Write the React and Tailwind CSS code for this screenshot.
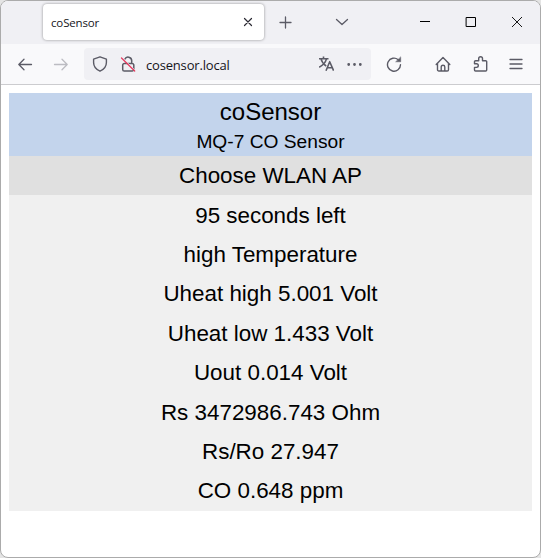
const readings = [
  '95 seconds left',
  'high Temperature',
  'Uheat high 5.001 Volt',
  'Uheat low 1.433 Volt',
  'Uout 0.014 Volt',
  'Rs 3472986.743 Ohm',
  'Rs/Ro 27.947',
  'CO 0.648 ppm',
];

function Icon({ children, className = '', size = 16 }) {
  return (
    <svg
      width={size}
      height={size}
      viewBox={`0 0 ${size} ${size}`}
      fill="none"
      stroke="currentColor"
      strokeWidth="1.2"
      strokeLinecap="round"
      strokeLinejoin="round"
      className={`block shrink-0 ${className}`}
    >
      {children}
    </svg>
  );
}

function TabStrip() {
  return (
    <div className="flex h-[43px] shrink-0 items-start bg-[#f0f0f4] text-[#5b5b66]">
      <div className="ml-[42px] mt-[3px] flex h-[36px] w-[221px] items-center rounded-[4px] bg-white pl-[8px] shadow-[0_0_3px_rgba(0,0,0,0.4)]">
        <span className="w-[48px] whitespace-nowrap pt-[2px] text-[11.5px] tracking-[-0.15px] text-[#15141a]">coSensor</span>
        <Icon className="ml-[141px] text-[#2b2a33]">
          <path d="M4.500 4.500l7 7M11.500 4.500l-7 7" />
        </Icon>
      </div>
      <Icon className="ml-[14px] mt-[14px]">
        <path d="M7.500 2v11M2 7.500h11" strokeWidth="1.300" />
      </Icon>
      <Icon className="ml-[40px] mt-[13px]">
        <path d="M2.500 5.500L8 10.500l5.500-5" strokeWidth="1.300" />
      </Icon>
      <Icon className="ml-[67px] mt-[13px] text-black">
        <path d="M3 7.500h10" strokeWidth="1" strokeLinecap="butt" />
      </Icon>
      <Icon className="ml-[30px] mt-[13px] text-black">
        <path d="M3.500 3.500h9v9h-9z" strokeWidth="1" strokeLinejoin="miter" />
      </Icon>
      <Icon className="ml-[30px] mt-[13px] text-black">
        <path d="M3 3l10 10M13 3L3 13" strokeWidth="0.9" strokeLinecap="butt" />
      </Icon>
    </div>
  );
}

function Toolbar() {
  return (
    <div className="flex h-[41px] shrink-0 items-center border-b border-[#cccccf] bg-[#f9f9fb] text-[#5b5b66]">
      <Icon className="ml-[16px]">
        <path d="M14.500 8.500H1.800M7 3.300L1.800 8.500 7 13.700" strokeWidth="1.300" />
      </Icon>
      <Icon className="ml-[20px] text-[#bcbcc2]">
        <path d="M1.500 8.500h12.700M9 3.300L14.200 8.500 9 13.700" strokeWidth="1.300" />
      </Icon>
      <div className="ml-[15px] flex h-[32px] w-[287px] items-center rounded-[4px] bg-[#f0f0f4]">
        <Icon className="ml-[8px]">
          <path d="M8 .8l6.400 2.300v3.400c0 4-2.400 6.900-6.400 8.700C4 13.400 1.600 10.500 1.600 6.500V3.100z" strokeWidth="1.400" />
        </Icon>
        <Icon className="ml-[12px]">
          <path d="M4.300 7.500h7.900a1.600 1.600 0 0 1 1.600 1.600v4.300a1.600 1.600 0 0 1-1.600 1.600H4.300a1.600 1.600 0 0 1-1.600-1.600V9.100a1.600 1.600 0 0 1 1.600-1.600zM4.800 3.300A3.600 3.600 0 0 1 11.700 4.600v2.900" strokeWidth="1.500" />
          <path d="M2.400 1.700l13 13" stroke="#f0f0f4" strokeWidth="1" />
          <path d="M1.500 2l13.200 13" stroke="#e53c61" strokeWidth="1.300" />
        </Icon>
        <span className="ml-[10px] w-[84px] whitespace-nowrap pt-[3px] text-[13px] tracking-[-0.18px] text-[#15141a]">cosensor.local</span>
        <Icon className="ml-[88px]">
          <path d="M1 2.700h9.500M5.500.5v2.200M3 2.900c.8 3 2.700 5.600 5.200 7.100M8.500 2.900C7.500 6.500 5 9.300 1.200 11.200M8 14.700l3.700-9 3.900 9M9.200 11.700h5" strokeWidth="1.600" strokeLinecap="butt" />
        </Icon>
        <Icon className="ml-[13px]">
          <path d="M1.700 8.500h.01M7.500 8.500h.01M13.300 8.500h.01" strokeWidth="2.800" />
        </Icon>
      </div>
      <Icon className="ml-[15px]">
        <path d="M12.200 3.700A6.500 6.500 0 1 0 14.500 8.700" strokeWidth="1.400" />
        <path d="M14.700 1.200v4.600H10z" fill="currentColor" strokeWidth=".5" />
      </Icon>
      <Icon className="ml-[33px]">
        <path d="M1.200 8.500L8 1.500l6.800 7M2.500 7.500v6.200a1.300 1.300 0 0 0 1.300 1.300h8.400a1.300 1.300 0 0 0 1.300-1.300V7.500M6.200 15v-4a1.800 1.800 0 0 1 3.600 0v4" strokeWidth="1.400" />
      </Icon>
      <Icon className="ml-[22px]">
        <path d="M2.500 15h10.200a1 1 0 0 0 1-1V5.700a1 1 0 0 0-1-1H9.500V2.600a1.900 1.900 0 0 0-3.800 0v2.100H2.500a1 1 0 0 0-1 1v2.100h2a1.800 1.800 0 0 1 0 3.600h-2V14a1 1 0 0 0 1 1z" strokeWidth="1.400" />
      </Icon>
      <Icon className="ml-[19px]">
        <path d="M2 3.500h12M2 8h12M2 12.500h12" strokeWidth="1.300" />
      </Icon>
    </div>
  );
}

export default function App() {
  return (
    <div className="h-[558px] w-[541px] overflow-hidden bg-[#e4e4e4]">
      <div className="flex h-full flex-col overflow-hidden rounded-[8px] border border-[#ababab] bg-white font-['Open_Sans',sans-serif]">
        <TabStrip />
        <Toolbar />
        <main className="mx-[8px] mt-[8px] text-center font-['Liberation_Sans',Arial,sans-serif] text-[22.4px] text-black">
          <header className="flex h-[63px] flex-col bg-[#c3d4ec] pt-[5px]">
            <h1 className="text-[24px] leading-[28px]">coSensor</h1>
            <p className="text-[19.2px] leading-[31px]">MQ-7 CO Sensor</p>
          </header>
          <div className="h-[39px] bg-[#e0e0e0] leading-[39px]">Choose WLAN AP</div>
          <div className="h-[316px] bg-[#f0f0f0] pt-[0.65px]">
            {readings.map((reading) => (
              <div key={reading} className="h-[39.42px] leading-[40px]">{reading}</div>
            ))}
          </div>
        </main>
      </div>
    </div>
  );
}
